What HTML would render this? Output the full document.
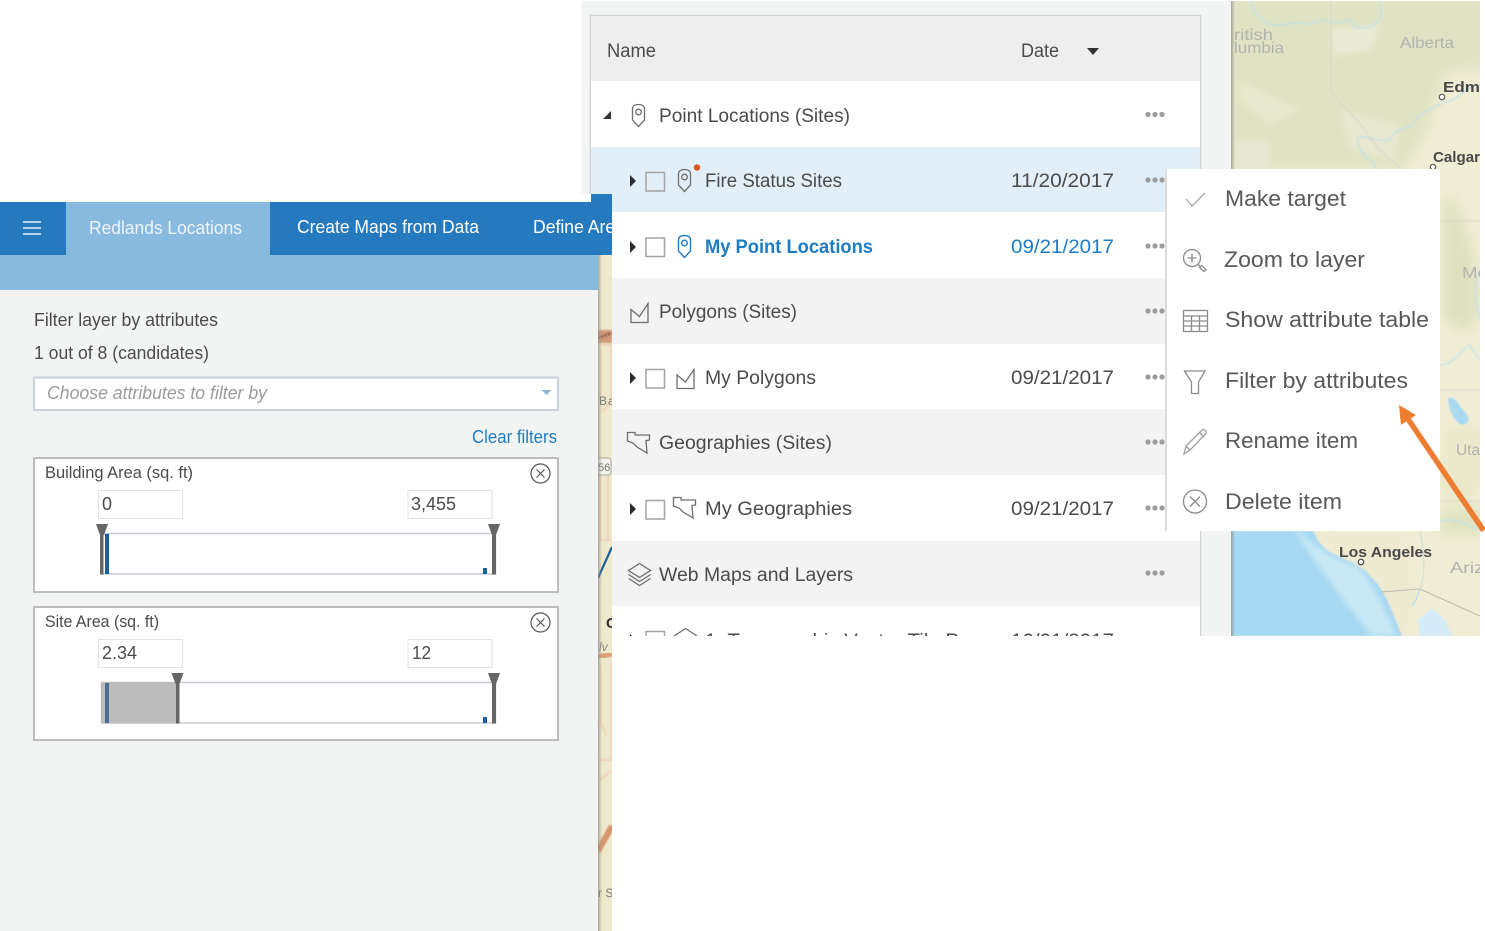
<!DOCTYPE html>
<html><head><meta charset="utf-8"><title>Filter by attributes</title>
<style>
html,body{margin:0;padding:0;background:#fff;width:1485px;height:931px;overflow:hidden}
svg{display:block}
text{font-family:"Liberation Sans",sans-serif;fill:#4c4c4c}
.t{font-size:19px}
.m{font-size:22px;fill:#595959}
.s{font-size:18px}
.ml{font-size:16px;fill:#b3b3ad}
.mb{font-size:15px;font-weight:bold;fill:#4a4a4a}
</style></head><body>
<svg width="1485" height="931" viewBox="0 0 1485 931" xmlns="http://www.w3.org/2000/svg">
<defs>
<filter id="b6" x="-30%" y="-30%" width="160%" height="160%"><feGaussianBlur stdDeviation="7"/></filter>
<filter id="b3" x="-30%" y="-30%" width="160%" height="160%"><feGaussianBlur stdDeviation="3"/></filter>
<filter id="b1" x="-20%" y="-20%" width="140%" height="140%"><feGaussianBlur stdDeviation="0.7"/></filter>
<filter id="b0" x="-5%" y="-5%" width="110%" height="110%"><feGaussianBlur stdDeviation="0.35"/></filter>
<linearGradient id="sh" x1="0" x2="1" y1="0" y2="0"><stop offset="0" stop-color="#8f8f8b" stop-opacity=".75"/><stop offset="1" stop-color="#8f8f8b" stop-opacity="0"/></linearGradient>
<clipPath id="cm"><rect x="1231" y="1" width="249" height="635"/></clipPath>
<clipPath id="cs"><rect x="598" y="255" width="14" height="676"/></clipPath>
<clipPath id="ct"><rect x="591" y="15" width="609" height="621"/></clipPath>
<clipPath id="cn"><rect x="0" y="194" width="612" height="61"/></clipPath>
</defs>

<rect width="1485" height="931" fill="#fff"/>

<!-- outer gray panel -->
<rect x="581" y="1" width="650" height="635" fill="#f3f5f5"/>

<!-- big map -->
<g clip-path="url(#cm)">
<rect x="1231" y="1" width="249" height="635" fill="#f0edd5"/>
<g filter="url(#b6)">
<path d="M1225 -5H1490V70L1445 72L1428 130L1405 170H1225Z" fill="#e0e3c3"/>
<path d="M1444 195L1455 200L1472 250L1480 300L1470 335L1444 320Z" fill="#dde0bd"/>
<path d="M1440 425H1490V470L1472 500L1440 500Z" fill="#ebe9ca"/>
<path d="M1440 508H1490V535H1440Z" fill="#e0e3c1"/>
<path d="M1310 531L1400 531L1420 600L1410 640H1385L1345 570Z" fill="#eeead0"/>
</g>
<g filter="url(#b3)">
<path d="M1330 30L1380 25L1370 50L1335 55Z" fill="#eaebd5"/>
<path d="M1240 80L1300 110L1270 125L1240 100Z" fill="#e7e8ce"/>
<path d="M1340 110L1400 125L1395 160L1350 150Z" fill="#e8e7cf"/>
<path d="M1235 140H1270V170H1235Z" fill="#e7e6d0"/>
</g>
<g fill="none" stroke="#bfe0ea" stroke-width="1.200" filter="url(#b1)">
<path d="M1250 1C1255 15 1265 25 1275 25C1290 25 1300 20 1310 25C1320 15 1335 25 1345 22C1355 15 1350 28 1360 28C1375 28 1385 20 1380 1"/>
<path d="M1480 85C1465 85 1460 100 1445 102C1428 110 1420 115 1416 118C1418 130 1395 125 1390 140C1380 142 1365 135 1358 138C1355 150 1372 160 1378 170"/>
<path d="M1440 365C1455 365 1462 348 1470 345C1475 355 1480 360 1480 358"/>
<path d="M1480 270C1472 285 1475 305 1480 318"/>
<path d="M1440 522C1450 515 1465 525 1480 530"/>
</g>
<g fill="none" stroke="#d6d6cb" stroke-width="1" filter="url(#b1)">
<path d="M1331 1V90C1340 105 1350 110 1365 130C1375 150 1395 160 1405 175"/>
<path d="M1440 221H1480M1440 390H1480M1440 501H1480"/>
</g>
<path d="M1448 398C1456 396 1458 405 1465 412C1472 420 1468 426 1460 424C1452 418 1449 410 1448 398Z" fill="#a9daf0" filter="url(#b1)"/>
<!-- ocean -->
<path d="M1231 531H1313C1318 542 1325 552 1340 557C1352 563 1362 566 1372 578C1385 590 1392 612 1402 636H1231Z" fill="#a5d8f1" filter="url(#b1)"/>
<path d="M1300 531C1315 550 1340 560 1358 566C1375 586 1388 615 1396 636H1372C1350 610 1320 570 1295 531Z" fill="#c8e8f5" filter="url(#b3)"/>
<path d="M1418 620L1432 608L1445 620L1452 636H1420Z" fill="#d3ecf7" filter="url(#b1)"/>
<path d="M1381 592L1420 589L1480 616" fill="none" stroke="#b9b8ab" stroke-width="1"/>
<path d="M1420 589L1416 600L1412 606" fill="none" stroke="#b5dced" stroke-width="1.300"/>
<path d="M1420 531C1425 555 1425 570 1421 588" fill="none" stroke="#cfdcdc" stroke-width="1"/>
<g filter="url(#b0)">
<text class="ml" x="1234" y="40" textLength="39" lengthAdjust="spacingAndGlyphs">ritish</text>
<text class="ml" x="1234" y="53" textLength="50" lengthAdjust="spacingAndGlyphs">lumbia</text>
<text class="ml" x="1400" y="48" textLength="54" lengthAdjust="spacingAndGlyphs">Alberta</text>
<text class="mb" x="1443" y="92" textLength="37" lengthAdjust="spacingAndGlyphs">Edm</text>
<text class="mb" x="1433" y="162" textLength="47" lengthAdjust="spacingAndGlyphs">Calgar</text>
<text class="ml" x="1462" y="278" textLength="26" lengthAdjust="spacingAndGlyphs">Mo</text>
<text class="ml" x="1456" y="455" textLength="24" lengthAdjust="spacingAndGlyphs">Uta</text>
<text class="mb" x="1339" y="557" textLength="93" lengthAdjust="spacingAndGlyphs">Los Angeles</text>
<text class="ml" x="1450" y="573" textLength="34" lengthAdjust="spacingAndGlyphs">Ariz</text>
</g>
<circle cx="1442" cy="97" r="2.700" fill="#fff" stroke="#555" stroke-width="1.200"/>
<circle cx="1433" cy="167" r="2.700" fill="#fff" stroke="#555" stroke-width="1.200"/>
<circle cx="1361" cy="562" r="2.700" fill="#fff" stroke="#444" stroke-width="1.200"/>
<rect x="1231" y="1" width="4" height="635" fill="url(#sh)"/>
</g>

<!-- table -->
<rect x="590.500" y="15.500" width="610" height="630" fill="#fff" stroke="#d2d2d2" stroke-width="1.500"/>
<g clip-path="url(#ct)">
<rect x="591" y="16" width="609" height="65" fill="#eeeeee"/>
<rect x="591" y="81" width="609" height="66" fill="#fff"/>
<rect x="591" y="147" width="609" height="65" fill="#e2eef8"/>
<rect x="591" y="212" width="609" height="66" fill="#fff"/>
<rect x="591" y="278" width="609" height="66" fill="#f3f3f3"/>
<rect x="591" y="344" width="609" height="65" fill="#fff"/>
<rect x="591" y="409" width="609" height="66" fill="#f3f3f3"/>
<rect x="591" y="475" width="609" height="66" fill="#fff"/>
<rect x="591" y="541" width="609" height="65" fill="#f3f3f3"/>
<rect x="591" y="606" width="609" height="40" fill="#fff"/>

<g filter="url(#b0)">
<text class="t" x="607" y="57" textLength="49" lengthAdjust="spacingAndGlyphs">Name</text>
<text class="t" x="1021" y="57" textLength="38" lengthAdjust="spacingAndGlyphs">Date</text>
<text class="t" x="659" y="122" textLength="191" lengthAdjust="spacingAndGlyphs">Point Locations (Sites)</text>
<text class="t" x="705" y="187" textLength="137" lengthAdjust="spacingAndGlyphs">Fire Status Sites</text>
<text class="t" x="1011" y="187" textLength="103" lengthAdjust="spacingAndGlyphs">11/20/2017</text>
<text class="t" x="705" y="253" textLength="168" lengthAdjust="spacingAndGlyphs" font-weight="bold" style="fill:#1f7cc4">My Point Locations</text>
<text class="t" x="1011" y="253" textLength="103" lengthAdjust="spacingAndGlyphs" style="fill:#1f7cc4">09/21/2017</text>
<text class="t" x="659" y="318" textLength="138" lengthAdjust="spacingAndGlyphs">Polygons (Sites)</text>
<text class="t" x="705" y="384" textLength="111" lengthAdjust="spacingAndGlyphs">My Polygons</text>
<text class="t" x="1011" y="384" textLength="103" lengthAdjust="spacingAndGlyphs">09/21/2017</text>
<text class="t" x="659" y="449" textLength="173" lengthAdjust="spacingAndGlyphs">Geographies (Sites)</text>
<text class="t" x="705" y="515" textLength="147" lengthAdjust="spacingAndGlyphs">My Geographies</text>
<text class="t" x="1011" y="515" textLength="103" lengthAdjust="spacingAndGlyphs">09/21/2017</text>
<text class="t" x="659" y="581" textLength="194" lengthAdjust="spacingAndGlyphs">Web Maps and Layers</text>
<text class="t" x="705" y="647" textLength="254" lengthAdjust="spacingAndGlyphs">1. Topographic Vector Tile P</text>
<text class="t" x="1011" y="647" textLength="103" lengthAdjust="spacingAndGlyphs">10/01/2017</text>
</g>

<!-- sort caret -->
<path d="M1087 48H1099L1093 55Z" fill="#333"/>
<!-- expanders -->
<path d="M603 119H611V111Z" fill="#333"/>
<g fill="#2b2b2b">
<path d="M630 175L636 181L630 187Z"/>
<path d="M630 241L636 247L630 253Z"/>
<path d="M630 372L636 378L630 384Z"/>
<path d="M630 503L636 509L630 515Z"/>
<path d="M630 634L636 640L630 646Z"/>
</g>
<!-- checkboxes -->
<g fill="#fff" stroke="#a3a3a3" stroke-width="1.500">
<rect x="646" y="172.500" width="18.500" height="18.500" fill="none"/>
<rect x="646" y="238" width="18.500" height="18.500"/>
<rect x="646" y="369.500" width="18.500" height="18.500"/>
<rect x="646" y="500.500" width="18.500" height="18.500"/>
<rect x="646" y="631.500" width="18.500" height="18.500"/>
</g>
<!-- pins -->
<g fill="none" stroke="#6e6e6e" stroke-width="1.300">
<path d="M632.500 109C632.500 106 635 104.500 638.500 104.500C642 104.500 644.500 106 644.500 109V120L638.500 126.500L632.500 120Z"/>
<circle cx="638.500" cy="112" r="2.800"/>
<path d="M678.500 174C678.500 171 681 169.500 684.500 169.500C688 169.500 690.500 171 690.500 174V185L684.500 191.500L678.500 185Z"/>
<circle cx="684.500" cy="177" r="2.800"/>
</g>
<circle cx="697" cy="167.500" r="3.200" fill="#d9591c"/>
<g fill="none" stroke="#1f7cc4" stroke-width="1.400">
<path d="M678.500 240C678.500 237 681 235.500 684.500 235.500C688 235.500 690.500 237 690.500 240V251L684.500 257.500L678.500 251Z"/>
<circle cx="684.500" cy="243" r="2.800"/>
</g>
<!-- polygon icons -->
<g fill="none" stroke="#6e6e6e" stroke-width="1.300">
<path d="M631 309.500L639.500 316.500L648 303.500V322.500H631Z"/>
<path d="M677 375L685.500 382L694 369.500V388.500H677Z"/>
<!-- geography icons -->
<path d="M627.500 432.500H635V435H649.500V440L646 440.500L647 453L637 447L633 443L627.500 441Z"/>
<path d="M673.500 497.500H681V500H695.500V505L692 505.500L693 518L683 512L679 508L673.500 506Z"/>
<!-- layers -->
<path d="M639.500 563.500L650.500 570.500L639.500 577.500L628.500 570.500Z"/>
<path d="M628.500 574.500L639.500 581.500L650.500 574.500"/>
<path d="M628.500 578.500L639.500 585.500L650.500 578.500"/>
<!-- cut-off row -->
<path d="M674 636L685.500 628.500L697 636"/>
</g>
<!-- dots -->
<g fill="#9c9c9c">
<circle cx="1148" cy="114.500" r="2.600"/><circle cx="1155" cy="114.500" r="2.600"/><circle cx="1162" cy="114.500" r="2.600"/>
<circle cx="1148" cy="180" r="2.600"/><circle cx="1155" cy="180" r="2.600"/><circle cx="1162" cy="180" r="2.600"/>
<circle cx="1148" cy="246" r="2.600"/><circle cx="1155" cy="246" r="2.600"/><circle cx="1162" cy="246" r="2.600"/>
<circle cx="1148" cy="311" r="2.600"/><circle cx="1155" cy="311" r="2.600"/><circle cx="1162" cy="311" r="2.600"/>
<circle cx="1148" cy="377" r="2.600"/><circle cx="1155" cy="377" r="2.600"/><circle cx="1162" cy="377" r="2.600"/>
<circle cx="1148" cy="442" r="2.600"/><circle cx="1155" cy="442" r="2.600"/><circle cx="1162" cy="442" r="2.600"/>
<circle cx="1148" cy="508" r="2.600"/><circle cx="1155" cy="508" r="2.600"/><circle cx="1162" cy="508" r="2.600"/>
<circle cx="1148" cy="573" r="2.600"/><circle cx="1155" cy="573" r="2.600"/><circle cx="1162" cy="573" r="2.600"/>
</g>
</g>

<!-- white below y=636 -->
<rect x="581" y="636" width="904" height="295" fill="#fff"/>

<!-- white behind the left panel top -->
<rect x="0" y="0" width="581" height="202" fill="#fff"/>
<rect x="581" y="194" width="10" height="8" fill="#fff"/>

<!-- left map strip -->
<g clip-path="url(#cs)">
<rect x="598" y="255" width="14" height="676" fill="#efe9cc"/>
<g fill="none" stroke="#efcdb0" stroke-width="1.500" filter="url(#b1)">
<path d="M600 348V400M611 345V400M600 345H612"/>
<path d="M602 412L612 400M600 475V540M608 475V540M600 540H612"/>
<path d="M600 665V720L606 735M611 665V760M600 760H612"/>
<path d="M600 780L612 770"/>
</g>
<rect x="598" y="330" width="14" height="13" fill="#d19a78" filter="url(#b1)"/>
<path d="M598 338L612 333" stroke="#8a5a42" stroke-width="3" stroke-dasharray="2 1.500" fill="none" filter="url(#b1)"/>
<path d="M598 657L612 654" stroke="#de9e76" stroke-width="5" fill="none" filter="url(#b1)"/>
<path d="M598 851L612 826" stroke="#d8946c" stroke-width="6" fill="none" filter="url(#b1)"/>
<path d="M598 578L612 547" stroke="#1b5e9c" stroke-width="2.200" fill="none"/>
<rect x="597" y="458" width="14" height="17" rx="3" fill="#f4f3ec" stroke="#a9a9a2"/>
<g filter="url(#b0)">
<text x="598" y="471" font-size="11" style="fill:#777">56</text>
<text x="599" y="405" font-size="12" style="fill:#777" letter-spacing="1">Ba</text>
<text x="606" y="628" font-size="15" font-weight="bold" style="fill:#333">C</text>
<text x="599" y="651" font-size="12" font-style="italic" style="fill:#888">lv</text>
<text x="598" y="897" font-size="12" style="fill:#777">r S</text>
</g>
<rect x="598" y="255" width="4" height="676" fill="url(#sh)"/>
</g>

<!-- left panel -->
<rect x="0" y="290" width="598" height="641" fill="#f2f4f4"/>
<rect x="0" y="255" width="598" height="35" fill="#88b9de"/>
<!-- nav -->
<rect x="0" y="202" width="612" height="53" fill="#2579be"/>
<rect x="591" y="194" width="21" height="9" fill="#2579be"/>
<rect x="66" y="202" width="204" height="54" fill="#88b9de"/>
<g stroke="#e6f0f8" stroke-width="1.500">
<path d="M23 222H41M23 228H41M23 234H41"/>
</g>
<g clip-path="url(#cn)">
<g filter="url(#b0)">
<text x="89" y="234" font-size="18" textLength="153" lengthAdjust="spacingAndGlyphs" style="fill:#eef5fb">Redlands Locations</text>
<text x="297" y="233" font-size="18" textLength="182" lengthAdjust="spacingAndGlyphs" style="fill:#fff">Create Maps from Data</text>
<text x="533" y="233" font-size="18" textLength="92" lengthAdjust="spacingAndGlyphs" style="fill:#fff">Define Area</text>
</g>
</g>

<g filter="url(#b0)">
<text class="s" x="34" y="326" textLength="184" lengthAdjust="spacingAndGlyphs">Filter layer by attributes</text>
<text class="s" x="34" y="359" textLength="175" lengthAdjust="spacingAndGlyphs">1 out of 8 (candidates)</text>
</g>
<!-- dropdown -->
<rect x="34" y="377.500" width="524" height="32.500" fill="#fff" stroke="#c8d0dc" stroke-width="2"/>
<text class="s" x="47" y="399" textLength="220" lengthAdjust="spacingAndGlyphs" font-style="italic" style="fill:#9b9b9b" filter="url(#b0)">Choose attributes to filter by</text>
<path d="M541.500 390H551.500L546.500 395Z" fill="#8fb6d2"/>
<text class="s" x="472" y="443" textLength="85" lengthAdjust="spacingAndGlyphs" style="fill:#1f7cc4" filter="url(#b0)">Clear filters</text>

<!-- card 1 -->
<rect x="34" y="458" width="524" height="134" fill="#fff" stroke="#bdbdbd" stroke-width="2"/>
<text x="45" y="478" font-size="17" textLength="148" lengthAdjust="spacingAndGlyphs" filter="url(#b0)">Building Area (sq. ft)</text>
<circle cx="540.500" cy="473.500" r="9.500" fill="none" stroke="#555" stroke-width="1.200"/>
<path d="M536.500 469.500L544.500 477.500M544.500 469.500L536.500 477.500" stroke="#555" stroke-width="1.200"/>
<rect x="98.500" y="490.500" width="84" height="28" fill="#fff" stroke="#e2e2e2" stroke-width="1"/>
<rect x="408" y="490.500" width="84" height="28" fill="#fff" stroke="#e2e2e2" stroke-width="1"/>
<text class="s" x="102" y="510" filter="url(#b0)">0</text>
<text class="s" x="411" y="510" textLength="45" lengthAdjust="spacingAndGlyphs" filter="url(#b0)">3,455</text>
<rect x="101.500" y="533.500" width="394" height="40.500" fill="#fff" stroke="#c5ccd6" stroke-width="1.500"/>
<rect x="105" y="534" width="4" height="40" fill="#1b5e9c"/>
<rect x="483" y="568" width="4" height="6" fill="#1b5e9c"/>
<g fill="#666">
<path d="M96 524H108L104 535H100Z"/><rect x="100" y="533" width="3.500" height="41.500"/>
<path d="M488 524H500L496 535H492Z"/><rect x="492" y="533" width="4" height="41.500"/>
</g>

<!-- card 2 -->
<rect x="34" y="607" width="524" height="133" fill="#fff" stroke="#bdbdbd" stroke-width="2"/>
<text x="45" y="627" font-size="17" textLength="114" lengthAdjust="spacingAndGlyphs" filter="url(#b0)">Site Area (sq. ft)</text>
<circle cx="540.500" cy="622.500" r="9.500" fill="none" stroke="#555" stroke-width="1.200"/>
<path d="M536.500 618.500L544.500 626.500M544.500 618.500L536.500 626.500" stroke="#555" stroke-width="1.200"/>
<rect x="98.500" y="639.500" width="84" height="28" fill="#fff" stroke="#e2e2e2" stroke-width="1"/>
<rect x="408" y="639.500" width="84" height="28" fill="#fff" stroke="#e2e2e2" stroke-width="1"/>
<text class="s" x="102" y="659" textLength="35" lengthAdjust="spacingAndGlyphs" filter="url(#b0)">2.34</text>
<text class="s" x="412" y="659" textLength="19" lengthAdjust="spacingAndGlyphs" filter="url(#b0)">12</text>
<rect x="101.500" y="682.500" width="394" height="40.500" fill="#fff" stroke="#c5ccd6" stroke-width="1.500"/>
<rect x="101" y="682" width="76" height="41.500" fill="#bcbcbc"/>
<rect x="105" y="683" width="4" height="40" fill="#4e6f93"/>
<rect x="483" y="717" width="4" height="6" fill="#1b5e9c"/>
<g fill="#666">
<path d="M171.500 673H183.500L179.500 684H175.500Z"/><rect x="176" y="682" width="3.500" height="41.500"/>
<path d="M488 673H500L496 684H492Z"/><rect x="492" y="682" width="4" height="41.500"/>
</g>

<!-- context menu -->
<rect x="1165" y="169" width="2" height="362" fill="#dcdcdc"/>
<rect x="1167" y="169" width="273" height="362" fill="#fff"/>
<g class="menu" filter="url(#b0)">
<text class="m" x="1225" y="206" textLength="121" lengthAdjust="spacingAndGlyphs">Make target</text>
<text class="m" x="1224" y="267" textLength="141" lengthAdjust="spacingAndGlyphs">Zoom to layer</text>
<text class="m" x="1225" y="327" textLength="204" lengthAdjust="spacingAndGlyphs">Show attribute table</text>
<text class="m" x="1225" y="388" textLength="183" lengthAdjust="spacingAndGlyphs">Filter by attributes</text>
<text class="m" x="1225" y="448" textLength="133" lengthAdjust="spacingAndGlyphs">Rename item</text>
<text class="m" x="1225" y="509" textLength="117" lengthAdjust="spacingAndGlyphs">Delete item</text>
</g>
<g fill="none" stroke="#8a8a8a" stroke-width="1.300">
<path d="M1186 199L1192 206L1205 193" stroke="#a8a8a8"/>
<circle cx="1192" cy="258" r="8.500"/>
<path d="M1192 253.500V262.500M1187.500 258H1196.500"/>
<path d="M1198 264.500L1201 267M1201 265L1206 269.500L1204 271.500L1199 267"/>
<rect x="1183.500" y="310.500" width="24" height="21"/>
<path d="M1183.500 316H1207.500M1183.500 321H1207.500M1183.500 326H1207.500M1191.500 316V331.500M1199.500 316V331.500"/>
<path d="M1184.500 371H1205L1198.500 382V393.500H1191.500V382Z"/>
<path d="M1184 454L1186 446L1202 430C1204 428.500 1207 431 1206 433.500L1190 450Z" stroke="#a0a0a0"/>
<path d="M1186 446L1190 450M1199.500 432.500L1204 437" stroke="#a0a0a0"/>
<circle cx="1195" cy="501.500" r="11.500"/>
<path d="M1190 496.500L1200 506.500M1200 496.500L1190 506.500"/>
</g>

<!-- annotation arrow -->
<path d="M1483.500 530.500L1406 416" stroke="#ed7d31" stroke-width="5.500" fill="none"/>
<path d="M1399 405L1416 415L1401 425Z" fill="#ed7d31"/>
</svg>
</body></html>
